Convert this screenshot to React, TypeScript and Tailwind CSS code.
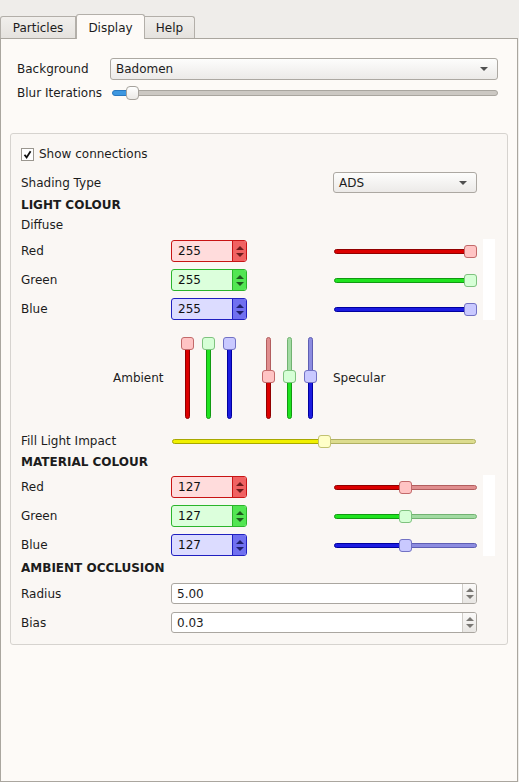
import React from "react";

type Theme = {
  fill: string;
  rest: string;
  handle: string;
  spin: string;
  btn: string;
  up: string;
  down: string;
};

const THEMES: Record<string, Theme> = {
  red: {
    fill: "bg-[#dc0000] border-[#920000]",
    rest: "bg-[#e08e8e] border-[#b25e5e]",
    handle: "bg-[#ffc4c4] border-[#c26a6a]",
    spin: "bg-[#ffdcdc] border-[#c81414]",
    btn: "bg-[#f06262] border-l-[#c81414]",
    up: "border-b-[#6e1c1c]",
    down: "border-t-[#6e1c1c]",
  },
  green: {
    fill: "bg-[#1fe31f] border-[#119a11]",
    rest: "bg-[#a2dba2] border-[#72b272]",
    handle: "bg-[#d6ffd6] border-[#7fc27f]",
    spin: "bg-[#dcffdc] border-[#2bb52b]",
    btn: "bg-[#52e652] border-l-[#2bb52b]",
    up: "border-b-[#1f5a1f]",
    down: "border-t-[#1f5a1f]",
  },
  blue: {
    fill: "bg-[#1c1ce0] border-[#0000a0]",
    rest: "bg-[#8c8ce0] border-[#5f5fb4]",
    handle: "bg-[#c9c9ff] border-[#7272c4]",
    spin: "bg-[#dcdcff] border-[#2020c0]",
    btn: "bg-[#7070f0] border-l-[#2020c0]",
    up: "border-b-[#20206e]",
    down: "border-t-[#20206e]",
  },
  yellow: {
    fill: "bg-[#f0f000] border-[#a8a800]",
    rest: "bg-[#dcdc8e] border-[#b0b062]",
    handle: "bg-[#ffffc8] border-[#c2c272]",
    spin: "",
    btn: "",
    up: "",
    down: "",
  },
};

function HSlider({ value, t, className }: { value: number; t: Theme; className: string }) {
  return (
    <div className={`relative h-[13px] ${className}`}>
      <div className="absolute inset-x-0 top-[4px] flex h-[5px]">
        <div className={`h-full rounded-l-full border ${t.fill}`} style={{ width: `${value * 100}%` }} />
        <div className={`h-full flex-1 rounded-r-full border ${t.rest}`} />
      </div>
      <div
        className={`absolute top-0 h-[13px] w-[13px] rounded-[3px] border ${t.handle}`}
        style={{ left: `calc(${value} * (100% - 13px))` }}
      />
    </div>
  );
}

function VSlider({ value, t }: { value: number; t: Theme }) {
  return (
    <div className="relative h-[82px] w-[13px]">
      <div className="absolute inset-y-0 left-[4px] flex w-[5px] flex-col">
        <div className={`w-full rounded-t-full border ${t.rest}`} style={{ height: `${(1 - value) * 100}%` }} />
        <div className={`w-full flex-1 rounded-b-full border ${t.fill}`} />
      </div>
      <div
        className={`absolute left-0 h-[13px] w-[13px] rounded-[3px] border ${t.handle}`}
        style={{ top: `calc(${1 - value} * (100% - 13px))` }}
      />
    </div>
  );
}

function Arrows({ up, down }: { up: string; down: string }) {
  return (
    <div className="flex flex-col items-center gap-[3px]">
      <div className={`h-0 w-0 border-x-[4px] border-b-[4px] border-x-transparent ${up}`} />
      <div className={`h-0 w-0 border-x-[4px] border-t-[4px] border-x-transparent ${down}`} />
    </div>
  );
}

function ColorSpin({ value, t }: { value: string; t: Theme }) {
  return (
    <div className={`flex h-[22px] w-[76px] rounded-[3px] border ${t.spin}`}>
      <div className="flex flex-1 items-center pl-[6px] text-[12px] text-[#111]">{value}</div>
      <div className={`flex w-[14px] items-center justify-center rounded-r-[2px] border-l ${t.btn}`}>
        <Arrows up={t.up} down={t.down} />
      </div>
    </div>
  );
}

function Spin({ value }: { value: string }) {
  return (
    <div className="flex h-[21px] w-[306px] rounded-[3px] border border-[#aaa6a0] bg-white">
      <div className="flex flex-1 items-center pl-[5px]">{value}</div>
      <div className="flex w-[14px] items-center justify-center rounded-r-[2px] border-l border-l-[#cfccc7] bg-gradient-to-b from-[#fbfaf9] to-[#e8e6e3]">
        <Arrows up="border-b-[#7a7874]" down="border-t-[#7a7874]" />
      </div>
    </div>
  );
}

function Combo({ value, className }: { value: string; className: string }) {
  return (
    <div
      className={`flex items-center rounded-[3px] border border-[#aca8a2] bg-gradient-to-b from-[#fdfdfc] to-[#eceae8] pl-[5px] pr-[9px] ${className}`}
    >
      <span className="flex-1">{value}</span>
      <div className="h-0 w-0 border-x-[4px] border-t-[4px] border-x-transparent border-t-[#505050]" />
    </div>
  );
}

function ColorRow({ label, value, slider, t }: { label: string; value: string; slider: number; t: Theme }) {
  return (
    <div className="flex h-[22px] items-center">
      <div className="w-[150px]">{label}</div>
      <ColorSpin value={value} t={t} />
      <HSlider value={slider} t={t} className="ml-[87px] w-[143px]" />
    </div>
  );
}

function ColorBlock({ value, slider, className }: { value: string; slider: number; className: string }) {
  return (
    <div className={`flex ${className}`}>
      <div className="flex w-[456px] flex-col gap-[7px] pt-[1px]">
        <ColorRow label="Red" value={value} slider={slider} t={THEMES.red} />
        <ColorRow label="Green" value={value} slider={slider} t={THEMES.green} />
        <ColorRow label="Blue" value={value} slider={slider} t={THEMES.blue} />
      </div>
      <div className="ml-[6px] w-[12px] bg-white" />
    </div>
  );
}

function Heading({ children, className }: { children: React.ReactNode; className: string }) {
  return <div className={`flex h-[18px] items-center font-bold ${className}`}>{children}</div>;
}

export default function App() {
  return (
    <div className="flex h-[782px] w-[519px] flex-col bg-[#efedea] font-['DejaVu_Sans',sans-serif] text-[12px] text-[#1c1c1c]">
      <div className="flex h-[38px] items-end">
        <div className="flex h-[22px] w-[76px] items-center justify-center rounded-tl-[3px] border border-b-0 border-[#b3afa9] bg-gradient-to-b from-[#f1efec] to-[#e5e2de]">
          Particles
        </div>
        <div className="relative top-px z-10 flex h-[25px] w-[69px] items-start justify-center rounded-t-[3px] border border-b-0 border-[#b3afa9] bg-[#fdfaf7] pt-[4px]">
          Display
        </div>
        <div className="flex h-[22px] w-[50px] items-center justify-center rounded-tr-[3px] border border-b-0 border-l-0 border-[#b3afa9] bg-gradient-to-b from-[#f1efec] to-[#e5e2de]">
          Help
        </div>
      </div>

      <div className="flex h-[744px] w-[518px] flex-col border border-[#aaa69f] bg-[#fdfaf7]">
        <div className="ml-[16px] mt-[19px] flex h-[22px] items-center">
          <div className="w-[93px]">Background</div>
          <Combo value="Badomen" className="h-[22px] w-[388px]" />
        </div>
        <div className="ml-[16px] mt-[6px] flex h-[14px] items-center">
          <div className="w-[95px]">Blur Iterations</div>
          <div className="relative h-[14px] w-[386px]">
            <div className="absolute inset-x-0 top-[4px] flex h-[6px]">
              <div className="h-full w-[16px] rounded-l-full border border-[#2a78c0] bg-[#3d97e0]" />
              <div className="h-full flex-1 rounded-r-full border border-[#a9a59f] bg-[#ccc8c3]" />
            </div>
            <div className="absolute left-[14px] top-0 h-[14px] w-[13px] rounded-[4px] border border-[#a6a29c] bg-gradient-to-b from-white to-[#ebe9e6]" />
          </div>
        </div>

        <div className="ml-[9px] mt-[33px] flex w-[498px] flex-col rounded-[3px] border border-[#d6d3cf] bg-[#faf7f4] pb-[11px] pl-[10px]">
          <div className="mt-[10px] flex h-[20px] items-center">
            <div className="flex h-[13px] w-[13px] items-center justify-center border border-[#9a968f] bg-white">
              <svg width="9" height="9" viewBox="0 0 9 9">
                <path d="M1.5 4.8 L3.6 7.4 L7.6 1.2" fill="none" stroke="#111" strokeWidth="1.8" />
              </svg>
            </div>
            <span className="ml-[5px]">Show connections</span>
          </div>
          <div className="mt-[8px] flex h-[21px] items-center">
            <div className="w-[312px]">Shading Type</div>
            <Combo value="ADS" className="h-[21px] w-[144px]" />
          </div>
          <Heading className="mt-[3px]">LIGHT COLOUR</Heading>
          <div className="mt-[2px] flex h-[18px] items-center">Diffuse</div>
          <ColorBlock value="255" slider={1} className="mt-[5px]" />

          <div className="mt-[17px] flex h-[82px] items-center">
            <div className="ml-[92px] w-[68px]">Ambient</div>
            <div className="flex gap-[8px]">
              <VSlider value={1} t={THEMES.red} />
              <VSlider value={1} t={THEMES.green} />
              <VSlider value={1} t={THEMES.blue} />
            </div>
            <div className="ml-[26px] flex gap-[8px]">
              <VSlider value={0.52} t={THEMES.red} />
              <VSlider value={0.52} t={THEMES.green} />
              <VSlider value={0.52} t={THEMES.blue} />
            </div>
            <div className="ml-[16px]">Specular</div>
          </div>

          <div className="mt-[13px] flex h-[18px] items-center">
            <div className="w-[151px]">Fill Light Impact</div>
            <HSlider value={0.5} t={THEMES.yellow} className="w-[304px]" />
          </div>
          <Heading className="mt-[3px]">MATERIAL COLOUR</Heading>
          <ColorBlock value="127" slider={0.498} className="mt-[4px]" />

          <Heading className="mt-[3px]">AMBIENT OCCLUSION</Heading>
          <div className="mt-[6px] flex h-[21px] items-center">
            <div className="w-[150px]">Radius</div>
            <Spin value="5.00" />
          </div>
          <div className="mt-[8px] flex h-[21px] items-center">
            <div className="w-[150px]">Bias</div>
            <Spin value="0.03" />
          </div>
        </div>
      </div>
    </div>
  );
}
